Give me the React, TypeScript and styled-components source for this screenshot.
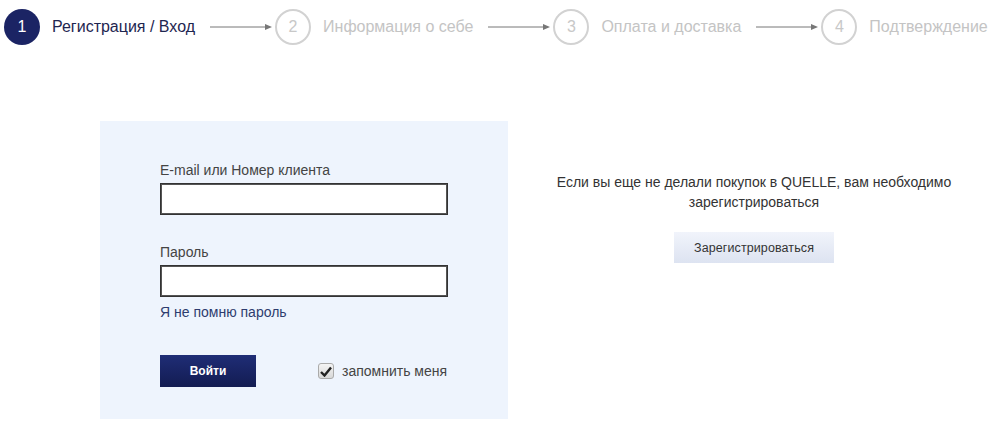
import React from "react";
import { createGlobalStyle, styled } from "styled-components";

const GlobalStyle = createGlobalStyle`
    html, body {
        margin: 0;
        padding: 0;
        background: #fff;
        font-family: "Liberation Sans", Arial, sans-serif;
    }
`;

const Page = styled.div`
    width: 1000px;
    height: 423px;
    overflow: hidden;
`;

const Steps = styled.div`
    display: flex;
    align-items: center;
    height: 35px;
    padding: 9px 0 0 4px;
`;

const Step = styled.div`
    display: flex;
    align-items: center;
    gap: 12px;
`;

const StepCircle = styled.div<{ $active?: boolean }>`
    box-sizing: border-box;
    width: 36px;
    height: 36px;
    border-radius: 50%;
    display: flex;
    align-items: center;
    justify-content: center;
    font-size: 16px;
    background: ${({ $active }) => ($active ? "#1b2464" : "#fff")};
    color: ${({ $active }) => ($active ? "#fff" : "#c8c8c8")};
    border: ${({ $active }) => ($active ? "none" : "2px solid #d2d2d2")};
`;

const StepLabel = styled.span<{ $active?: boolean }>`
    font-size: 16px;
    color: ${({ $active }) => ($active ? "#1e2650" : "#c4c4c4")};
    white-space: nowrap;
`;

const Arrow = styled.svg`
    margin: 0 3px 0 15px;
    flex: none;
`;

const Main = styled.div`
    display: flex;
    margin-top: 77px;
    padding-left: 100px;
`;

const LoginPanel = styled.div`
    box-sizing: border-box;
    width: 408px;
    height: 298px;
    background: #eef4fd;
    padding: 41px 60px 0;
`;

const FieldLabel = styled.div`
    font-size: 14px;
    color: #444;
    line-height: 16px;
    margin-bottom: 5px;
`;

const Input = styled.input`
    box-sizing: border-box;
    display: block;
    width: 288px;
    height: 32px;
    border: 1px solid #333;
    box-shadow: inset 0 0 0 1px #555;
    background: #fff;
    margin: 0 0 29px;
    padding: 0 8px;
    outline: none;
`;

const ForgotLink = styled.a`
    display: block;
    margin-top: -22px;
    font-size: 14px;
    line-height: 16px;
    color: #2d3c6e;
    text-decoration: none;
`;

const ActionRow = styled.div`
    display: flex;
    align-items: center;
    margin-top: 35px;
`;

const LoginButton = styled.button`
    width: 96px;
    height: 32px;
    border: none;
    background: linear-gradient(#1f2d76, #131c52);
    color: #fff;
    font-family: inherit;
    font-weight: bold;
    font-size: 12px;
    cursor: pointer;
`;

const Remember = styled.label`
    display: flex;
    align-items: center;
    gap: 8px;
    margin-left: 62px;
    font-size: 14px;
    color: #444;
`;

const CheckBox = styled.span`
    box-sizing: border-box;
    width: 16px;
    height: 16px;
    border: 1px solid #aaa;
    border-radius: 3px;
    background: linear-gradient(#f4f4f4, #d8d8d8);
    display: flex;
    align-items: center;
    justify-content: center;
`;

const RegisterColumn = styled.div`
    flex: 1;
    display: flex;
    flex-direction: column;
    align-items: center;
    padding-top: 51px;
`;

const RegisterText = styled.p`
    margin: 0;
    font-size: 14px;
    line-height: 20px;
    color: #333;
    text-align: center;
    width: 420px;
`;

const RegisterButton = styled.button`
    margin-top: 20px;
    width: 160px;
    height: 31px;
    border: none;
    background: linear-gradient(#f1f4fb, #dde3f1);
    color: #333;
    font-family: inherit;
    font-size: 12.5px;
    letter-spacing: 0.1px;
    cursor: pointer;
`;

const steps = [
    "Регистрация / Вход",
    "Информация о себе",
    "Оплата и доставка",
    "Подтверждение",
];

const StepArrow = () => (
    <Arrow width="62" height="10" viewBox="0 0 62 10">
        <line x1="0" y1="5" x2="57" y2="5" stroke="#777" strokeWidth="1" />
        <path d="M55 2 L62 5 L55 8 Z" fill="#777" />
    </Arrow>
);

const App: React.FC = () => {
    return (
        <Page>
            <GlobalStyle />
            <Steps>
                {steps.map((label, i) => (
                    <React.Fragment key={label}>
                        {i > 0 && <StepArrow />}
                        <Step>
                            <StepCircle $active={i === 0}>{i + 1}</StepCircle>
                            <StepLabel $active={i === 0}>{label}</StepLabel>
                        </Step>
                    </React.Fragment>
                ))}
            </Steps>
            <Main>
                <LoginPanel>
                    <FieldLabel>E-mail или Номер клиента</FieldLabel>
                    <Input type="text" />
                    <FieldLabel>Пароль</FieldLabel>
                    <Input type="password" />
                    <ForgotLink href="#">Я не помню пароль</ForgotLink>
                    <ActionRow>
                        <LoginButton>Войти</LoginButton>
                        <Remember>
                            <CheckBox>
                                <svg width="12" height="11" viewBox="0 0 12 11">
                                    <path d="M1 6 L4.5 9.5 L11 1.5" fill="none" stroke="#222" strokeWidth="2.4" />
                                </svg>
                            </CheckBox>
                            запомнить меня
                        </Remember>
                    </ActionRow>
                </LoginPanel>
                <RegisterColumn>
                    <RegisterText>
                        Если вы еще не делали покупок в QUELLE, вам необходимо зарегистрироваться
                    </RegisterText>
                    <RegisterButton>Зарегистрироваться</RegisterButton>
                </RegisterColumn>
            </Main>
        </Page>
    );
};

export default App;
